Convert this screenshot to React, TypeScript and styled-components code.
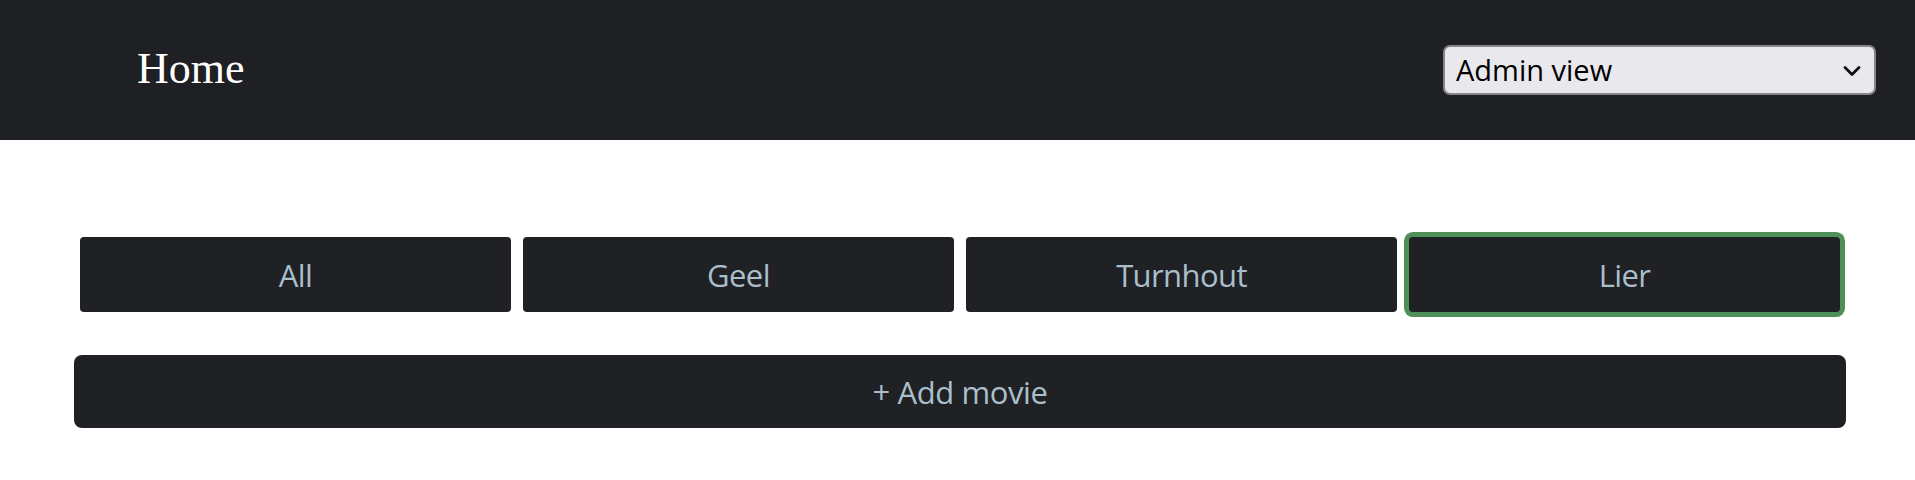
import React, { useState } from "react";
import styled, { createGlobalStyle } from "styled-components";

const GlobalStyle = createGlobalStyle`
  html, body { margin: 0; padding: 0; background: #ffffff; }
  body { font-family: "Open Sans", "Noto Sans", sans-serif; }
`;

const Header = styled.header`
  height: 140px;
  background: #1f2024;
  display: flex;
  align-items: center;
  justify-content: space-between;
  padding: 0 39px 0 137px;
  box-sizing: border-box;
`;

const Title = styled.h1`
  margin: 0 0 3px 0;
  font-family: "Liberation Serif", "Times New Roman", serif;
  font-weight: 400;
  font-size: 44px;
  color: #ffffff;
`;

const SelectWrap = styled.div`
  position: relative;
  width: 433px;
  height: 50px;
`;

const ViewSelect = styled.select`
  appearance: none;
  -webkit-appearance: none;
  width: 100%;
  height: 100%;
  box-sizing: border-box;
  border: 2px solid #85858d;
  border-radius: 7px;
  background: #e9e8ed;
  color: #000000;
  font-family: "Open Sans", "Noto Sans", sans-serif;
  font-size: 29px;
  padding: 0 40px 2px 11px;
  outline: none;
`;

const Chevron = styled.svg`
  position: absolute;
  right: 14px;
  top: 20px;
  width: 20px;
  height: 12px;
  pointer-events: none;
`;

const Main = styled.main`
  width: 1772px;
  margin-left: 74px;
  padding-top: 97px;
  display: flex;
  flex-direction: column;
  gap: 43px;
`;

const FilterRow = styled.div`
  display: grid;
  grid-template-columns: repeat(4, 1fr);
  gap: 12px;
  padding: 0 6px;
`;

const FilterButton = styled.button<{ $active?: boolean }>`
  height: 75px;
  border: none;
  border-radius: 4px;
  background: #202125;
  color: #a9bfcb;
  font-family: "Open Sans", "Noto Sans", sans-serif;
  font-size: 31px;
  letter-spacing: -0.6px;
  cursor: pointer;
  box-shadow: ${(p) => (p.$active ? "0 0 0 5px #4f8f58" : "none")};
`;

const AddButton = styled.button`
  height: 73px;
  width: 100%;
  border: none;
  border-radius: 8px;
  background: #202125;
  color: #a9bfcb;
  font-family: "Open Sans", "Noto Sans", sans-serif;
  font-size: 31px;
  letter-spacing: -0.4px;
  cursor: pointer;
`;

const locations = ["All", "Geel", "Turnhout", "Lier"];

export default function App() {
  const [active, setActive] = useState("Lier");
  return (
    <>
      <GlobalStyle />
      <Header>
        <Title>Home</Title>
        <SelectWrap>
          <ViewSelect defaultValue="admin">
            <option value="admin">Admin view</option>
            <option value="user">User view</option>
          </ViewSelect>
          <Chevron viewBox="0 0 20 12" fill="none">
            <path d="M3 2.5 L10 9.5 L17 2.5" stroke="#111" strokeWidth="2.8" strokeLinecap="round" strokeLinejoin="round" />
          </Chevron>
        </SelectWrap>
      </Header>
      <Main>
        <FilterRow>
          {locations.map((l) => (
            <FilterButton key={l} $active={active === l} onClick={() => setActive(l)}>
              {l}
            </FilterButton>
          ))}
        </FilterRow>
        <AddButton>+ Add movie</AddButton>
      </Main>
    </>
  );
}
